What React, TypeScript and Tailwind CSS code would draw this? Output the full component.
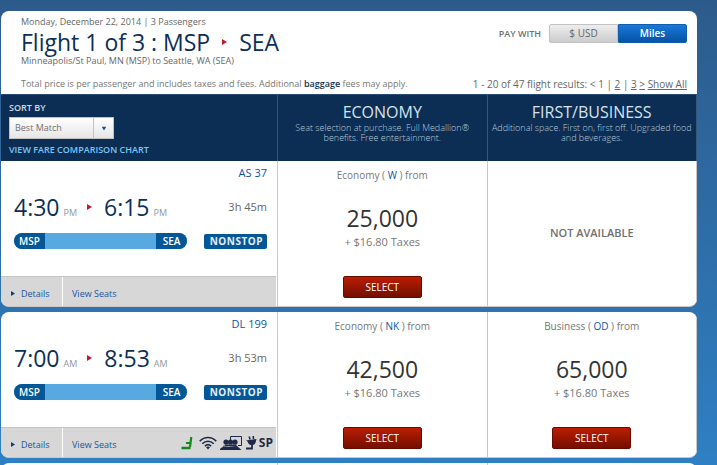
import React from "react";

type Fare = { cabin: string; code: string; miles: string } | null;

type Flight = {
  number: string;
  depart: string;
  arrive: string;
  period: string;
  duration: string;
  amenities: boolean;
  fares: Fare[];
};

const flights: Flight[] = [
  {
    number: "AS 37",
    depart: "4:30",
    arrive: "6:15",
    period: "PM",
    duration: "3h 45m",
    amenities: false,
    fares: [{ cabin: "Economy", code: "W", miles: "25,000" }, null],
  },
  {
    number: "DL 199",
    depart: "7:00",
    arrive: "8:53",
    period: "AM",
    duration: "3h 53m",
    amenities: true,
    fares: [
      { cabin: "Economy", code: "NK", miles: "42,500" },
      { cabin: "Business", code: "OD", miles: "65,000" },
    ],
  },
];

function Arrow({ className }: { className: string }) {
  return (
    <svg viewBox="0 0 5 6" className={className} fill="currentColor" aria-hidden="true">
      <path d="M0 0L5 3L0 6Z" />
    </svg>
  );
}

function Amenities() {
  return (
    <div className="ml-auto flex items-center gap-0.5 pr-[3px] text-[#1f2947]">
      <svg viewBox="0 0 12 14" className="mr-1 h-3.5 w-3 text-[#12891a]" fill="none" stroke="currentColor" aria-label="Flat bed seat">
        <path d="M10.300 1L9 11" strokeWidth="2.200" />
        <path d="M5 7H9" strokeWidth="1.800" />
        <path d="M0.500 12H9.500" strokeWidth="2.600" />
      </svg>
      <svg viewBox="0 0 18 14" className="h-3.5 w-4.5" fill="none" stroke="currentColor" strokeWidth="1.600" aria-label="Wi-Fi">
        <path d="M0.700 5.200C5.500 0.300 12.500 0.300 17.300 5.200" />
        <path d="M3.300 7.800C6.700 4.400 11.300 4.400 14.700 7.800" />
        <path d="M5.900 10.200C7.800 8.300 10.200 8.300 12.100 10.200" />
        <path d="M7 11.200Q9 9.800 11 11.200L9 13.600Z" fill="currentColor" stroke="none" />
      </svg>
      <svg viewBox="0 0 24 14" className="h-3.5 w-6" fill="currentColor" aria-label="Seatback video">
        <path d="M11.500 4V0.500H22.500V9.500H19" fill="none" stroke="currentColor" />
        <circle cx="7" cy="6" r="2.600" />
        <circle cx="11.500" cy="6" r="2.600" />
        <circle cx="16" cy="6" r="2.600" />
        <path d="M6 8.500H17.500V10H6Z" />
        <path d="M1 14C1 11.500 4 10.800 8 10.800L18 10L22.500 14Z" />
        <path d="M4 10.300L9 9.600" stroke="currentColor" />
      </svg>
      <svg viewBox="0 0 12 14" className="h-3.5 w-3" fill="currentColor" aria-label="Power outlet">
        <path d="M4.200 0.500L5 3.500M8.200 0L8.500 3" stroke="currentColor" strokeWidth="1.600" />
        <path d="M1 4.500L11.500 3L11 5C10.500 8 9 9 7.500 9L5.500 9C4 8.500 3 7 2.500 5.500Z" />
        <path d="M7 8.500V12.500H1" fill="none" stroke="currentColor" strokeWidth="1.800" />
      </svg>
      <span className="text-xs font-bold">SP</span>
    </div>
  );
}

function FlightCell({ flight }: { flight: Flight }) {
  return (
    <div className="flex flex-col border-r border-[#c8c8c8]">
      <div className="flex h-[115px] flex-col pr-2.5 pl-[13px]">
        <a href="#flight" className="pt-1 text-right text-[11px] leading-4 font-medium text-[#0b55a0]">
          {flight.number}
        </a>
        <div className="mt-3 flex h-7 items-baseline">
          <span className="text-[23px] leading-7 text-[#0d2f57]">{flight.depart}</span>
          <span className="ml-1 text-[9px] leading-3 text-[#8f989f]">{flight.period}</span>
          <Arrow className="mr-3 ml-2.5 h-1.5 w-[5px] self-center text-[#c01933]" />
          <span className="text-[23px] leading-7 text-[#0d2f57]">{flight.arrive}</span>
          <span className="ml-1 text-[9px] leading-3 text-[#8f989f]">{flight.period}</span>
          <span className="ml-auto self-center text-[11px] text-[#666]">{flight.duration}</span>
        </div>
        <div className="mt-3 flex items-center justify-between">
          <div className="flex h-4 w-[173px] items-center justify-between overflow-hidden rounded-full bg-[#58a9e2] text-[10px] leading-4 font-semibold text-white">
            <span className="w-[31px] bg-[#045797] text-center">MSP</span>
            <span className="w-[31px] bg-[#045797] text-center">SEA</span>
          </div>
          <span className="rounded-xs bg-[#045797] pr-1 pl-1.5 text-[10px] leading-[15px] font-bold tracking-wider text-[#e3eef7]">
            NONSTOP
          </span>
        </div>
      </div>
      <div className="mr-px flex h-[30px] items-center border-t border-[#c4c4c4] bg-[#d7d7d7] text-[9px] font-medium text-[#17559c]">
        <button className="flex h-full w-[62px] items-center gap-1.5 border-r border-white pt-1 pl-2.5">
          <Arrow className="h-[5px] w-1 text-[#103f75]" />
          Details
        </button>
        <a href="#seats" className="pt-1 pl-[9px]">View Seats</a>
        {flight.amenities && <Amenities />}
      </div>
    </div>
  );
}

function FareCell({ fare }: { fare: Fare }) {
  if (!fare) {
    return (
      <div className="flex items-center justify-center border-r border-[#c8c8c8] text-[11px] font-semibold text-[#707070]">
        NOT AVAILABLE
      </div>
    );
  }
  return (
    <div className="flex flex-col items-center border-r border-[#c8c8c8] text-[#777]">
      <p className="pt-1.5 text-[10px] leading-4">
        {fare.cabin} ( <a href="#fare" className="font-medium text-[#0b55a0]">{fare.code}</a> ) from
      </p>
      <p className="mt-5 text-[23px] leading-[31px] text-[#333]">{fare.miles}</p>
      <p className="text-[11px] leading-4">+ $16.80 Taxes</p>
      <button className="mt-[26px] h-[22px] w-[79px] rounded-xs border border-[#650b00] bg-linear-to-b from-[#bb1d00] to-[#740f00] text-[10px] font-medium text-white">
        SELECT
      </button>
    </div>
  );
}

const columns = "grid grid-cols-[277px_1fr_1fr]";

export default function App() {
  return (
    <div className="h-screen overflow-hidden bg-linear-to-b from-[#2c5b8b] to-[#2e80c4] pt-[11px] pr-5 pl-px font-['Open_Sans',sans-serif]">
      <main>
        <header className="flex justify-between rounded-t-lg bg-white pr-2.5 pb-[3px] pl-5 text-[#666]">
          <div>
            <p className="pt-1 text-[9px] leading-3.5">Monday, December 22, 2014 | 3 Passengers</p>
            <h1 className="flex items-center text-[23px] leading-[26px] text-[#0d2f57]">
              Flight 1 of 3 : MSP
              <Arrow className="mx-3 h-1.5 w-[5px] text-[#c01933]" />
              SEA
            </h1>
            <p className="text-[9px] leading-3">Minneapolis/St Paul, MN (MSP) to Seattle, WA (SEA)</p>
            <p className="mt-2.5 text-[9px] leading-3.5 text-[#777]">
              Total price is per passenger and includes taxes and fees. Additional{" "}
              <a href="#baggage" className="font-semibold text-[#0d2f57]">baggage</a> fees may apply.
            </p>
          </div>
          <div className="flex flex-col items-end justify-between pt-[13px]">
            <div className="flex items-center text-[10px]">
              <span className="mr-2 text-[9px] font-semibold text-[#707070]">PAY WITH</span>
              <button className="h-[19px] w-[69px] rounded-l-xs border border-[#c2c2c2] bg-linear-to-b from-[#eee] to-[#ccc] font-medium">
                $ USD
              </button>
              <button className="h-[19px] w-[69px] rounded-r-xs border border-[#0f5eb0] bg-linear-to-b from-[#1a78d8] to-[#0653a6] font-semibold text-white">
                Miles
              </button>
            </div>
            <nav className="text-[10px] leading-3.5">
              1 - 20 of 47 flight results: &lt; 1 | <a href="#2" className="font-medium underline">2</a> |{" "}
              <a href="#3" className="font-medium underline">3</a>{" "}
              <a href="#next" className="font-medium underline">&gt;</a>{" "}
              <a href="#all" className="font-medium underline">Show All</a>
            </nav>
          </div>
        </header>

        <section className={`${columns} h-[67px] border-t border-[#2b4c72] bg-[#0c2d54] text-center text-[9px] leading-2.5 text-[#b5cbdc]`}>
          <div className="flex flex-col items-start border-r border-[#36567b] pl-2 font-semibold">
            <label htmlFor="sort" className="pt-1.5 text-[9px] leading-3.5 text-[#cfdbe6]">SORT BY</label>
            <div className="relative mt-0.5">
              <select
                id="sort"
                className="h-[22px] w-[105px] appearance-none border border-[#c2c2c2] bg-linear-to-b from-white to-[#e6e6e6] pl-[5px] text-[9px] font-normal text-[#707070]"
              >
                <option>Best Match</option>
              </select>
              <span className="pointer-events-none absolute top-px right-px flex h-5 w-5 items-center justify-center border-l border-[#c2c2c2] text-[#0b55a0]">
                <Arrow className="h-[5px] w-1 rotate-90" />
              </span>
            </div>
            <a href="#chart" className="mt-1 leading-3.5 text-[#79c7f7]">VIEW FARE COMPARISON CHART</a>
          </div>
          <div className="border-r border-[#36567b] px-3">
            <h2 className="pt-1.5 text-base leading-[22px] text-[#d6e3ee]">ECONOMY</h2>
            <p className="font-light">Seat selection at purchase. Full Medallion® benefits. Free entertainment.</p>
          </div>
          <div className="border-r border-[#36567b] px-0.5">
            <h2 className="pt-1.5 text-base leading-[22px] text-[#d6e3ee]">FIRST/BUSINESS</h2>
            <p className="font-light">Additional space. First on, first off. Upgraded food and beverages.</p>
          </div>
        </section>

        <div className="flex flex-col gap-[5px]">
          {flights.map((flight, i) => (
            <article
              key={flight.number}
              className={`${columns} overflow-hidden border-b border-[#c8c8c8] bg-white ${i === 0 ? "rounded-b-lg" : "rounded-lg"}`}
            >
              <FlightCell flight={flight} />
              {flight.fares.map((fare, j) => (
                <FareCell key={j} fare={fare} />
              ))}
            </article>
          ))}
          <article className={`${columns} h-36 rounded-lg bg-white`}>
            <div className="border-r border-[#c8c8c8]" />
            <div className="border-r border-[#c8c8c8]" />
          </article>
        </div>
      </main>
    </div>
  );
}
